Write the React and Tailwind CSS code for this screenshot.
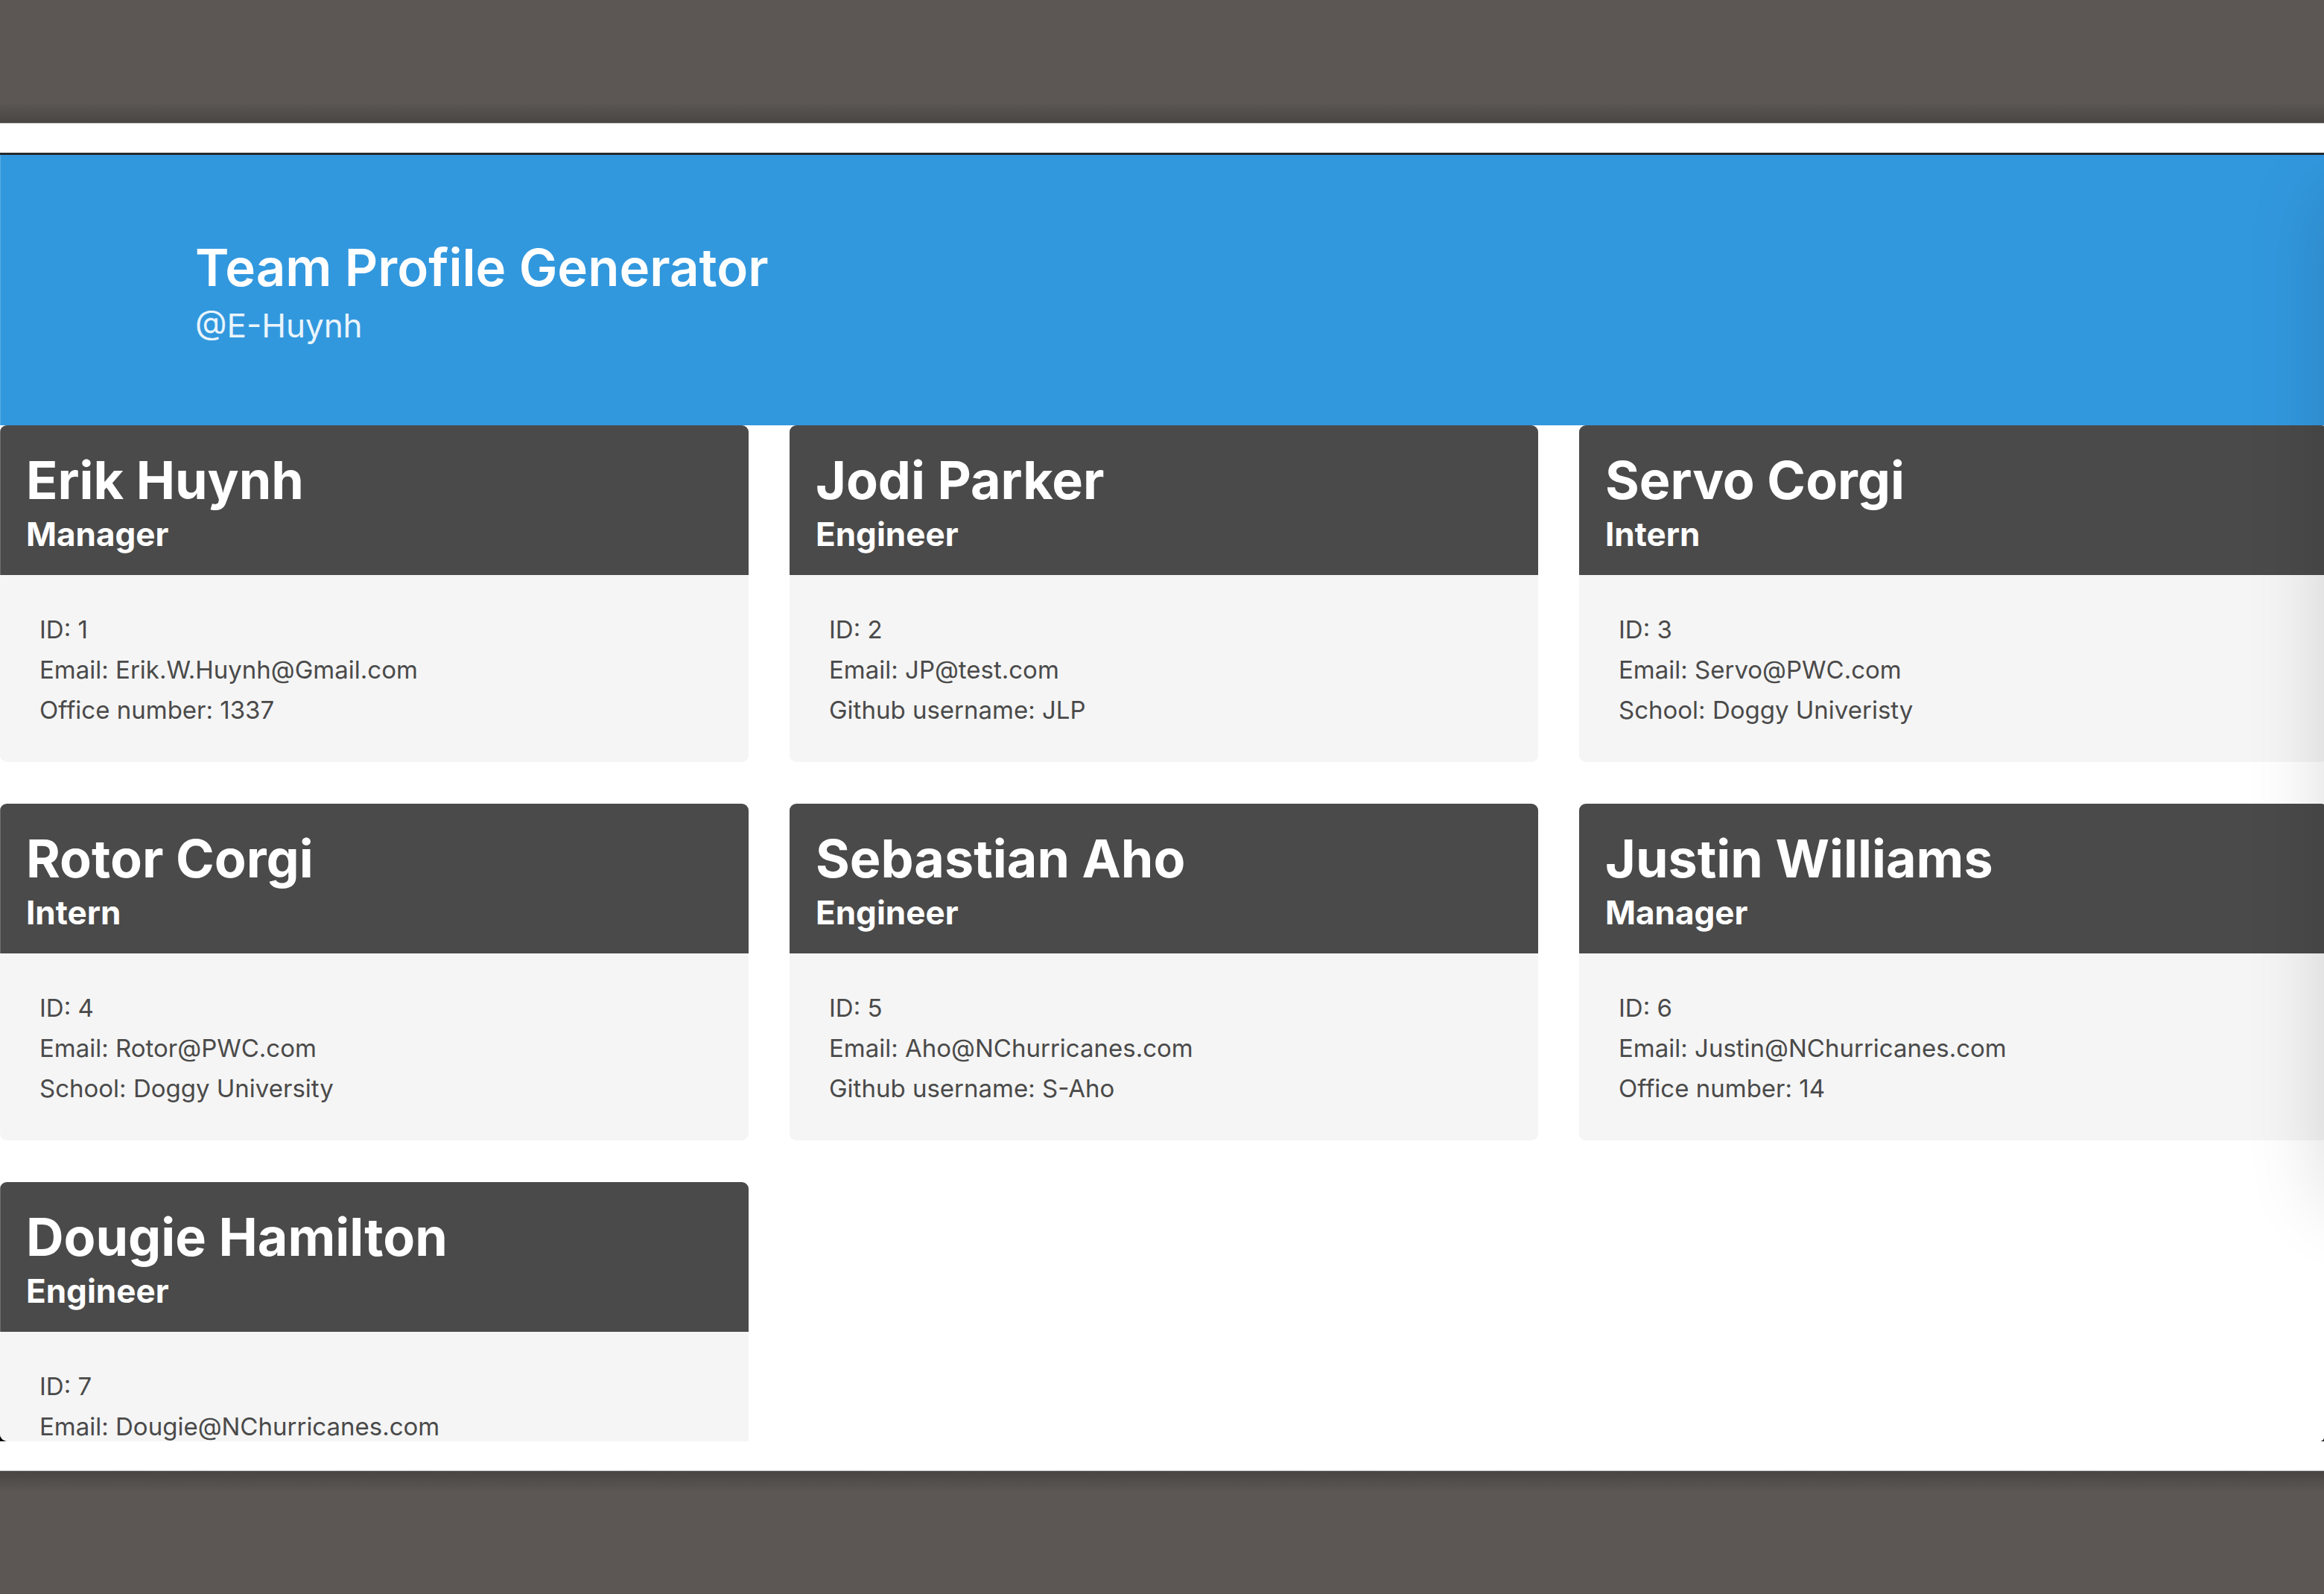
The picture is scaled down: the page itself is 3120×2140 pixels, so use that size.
const team = [
  { name: 'Erik Huynh', role: 'Manager', details: ['ID: 1', 'Email: Erik.W.Huynh@Gmail.com', 'Office number: 1337'] },
  { name: 'Jodi Parker', role: 'Engineer', details: ['ID: 2', 'Email: JP@test.com', 'Github username: JLP'] },
  { name: 'Servo Corgi', role: 'Intern', details: ['ID: 3', 'Email: Servo@PWC.com', 'School: Doggy Univeristy'] },
  { name: 'Rotor Corgi', role: 'Intern', details: ['ID: 4', 'Email: Rotor@PWC.com', 'School: Doggy University'] },
  { name: 'Sebastian Aho', role: 'Engineer', details: ['ID: 5', 'Email: Aho@NChurricanes.com', 'Github username: S-Aho'] },
  { name: 'Justin Williams', role: 'Manager', details: ['ID: 6', 'Email: Justin@NChurricanes.com', 'Office number: 14'] },
  { name: 'Dougie Hamilton', role: 'Engineer', details: ['ID: 7', 'Email: Dougie@NChurricanes.com'] },
];

function MemberCard({ name, role, details }) {
  return (
    <article className="overflow-hidden rounded-[9px] bg-[#f5f5f5]">
      <header className="bg-[#4a4a4a] px-[35px] pt-8 pb-[25px] text-white">
        <h2 className="text-[70px] leading-[84px] font-bold">{name}</h2>
        <p className="text-[44px] leading-[60px] font-bold">{role}</p>
      </header>
      <ul className="px-[53px] pt-[46px] pb-[43px] text-[33px] leading-[54px] text-[#4a4a4a]">
        {details.map((line) => (
          <li key={line}>{line}</li>
        ))}
      </ul>
    </article>
  );
}

export default function App() {
  return (
    <div className="flex h-screen flex-col overflow-hidden bg-[#5c5755] font-['Inter',sans-serif]">
      <div className="flex h-[165px] shrink-0 flex-col justify-end">
        <div className="h-7 bg-linear-to-b from-[#5c5755] to-[#484643]" />
      </div>
      <div className="flex min-h-0 flex-1 flex-col border-y border-[#c4c4c4] bg-white py-[39px]">
        <div className="min-h-0 flex-1 bg-black">
          <div className="relative h-full overflow-hidden rounded-br-[5px] rounded-bl-[10px] border-t-[3px] border-[#26292c] bg-white">
            <header className="bg-[#3298de] px-[262px] pt-[105px] pb-[102px] text-white">
              <h1 className="text-[69px] leading-[92px] font-semibold">Team Profile Generator</h1>
              <p className="text-[44px] leading-[64px] text-white/90">@E-Huynh</p>
            </header>
            <main className="-mr-[5px] grid grid-cols-3 gap-x-[55px] gap-y-[56px]">
              {team.map((member) => (
                <MemberCard key={member.name} {...member} />
              ))}
            </main>
            {/* Highlight along the window's left edge */}
            <div className="pointer-events-none absolute inset-0 border-l border-white/20" />
            {/* Shadow cast by the neighbouring window past the right edge */}
            <div className="pointer-events-none absolute top-[46px] bottom-[320px] left-full w-96 shadow-[0_0_100px_rgba(0,0,0,0.14)]" />
          </div>
        </div>
      </div>
      <div className="h-[165px] shrink-0">
        <div className="h-7 bg-linear-to-t from-[#5c5755] to-[#484643]" />
      </div>
    </div>
  );
}
